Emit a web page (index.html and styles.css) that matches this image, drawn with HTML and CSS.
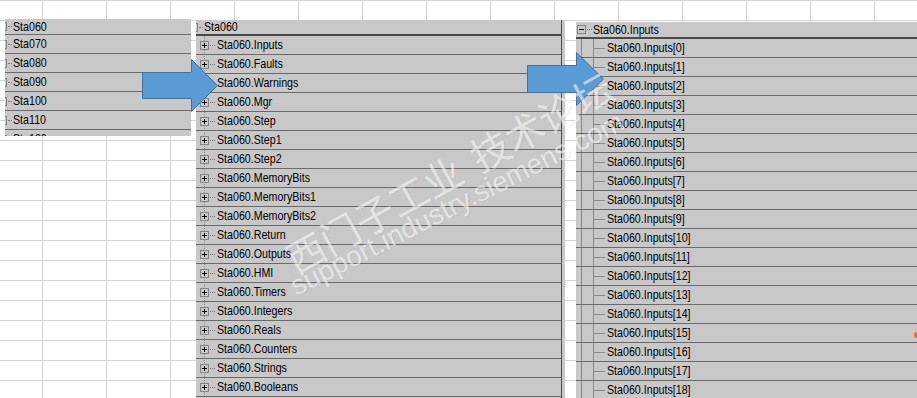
FILE: index.html
```html
<!DOCTYPE html>
<html lang="zh">
<head>
<meta charset="utf-8">
<title>Sta060</title>
<link rel="stylesheet" href="styles.css">
</head>
<body>
<div class="desk">
  <div class="panel left">
    <div class="list">
      <div class="row first"><span class="pm cut"></span><span class="dash"></span><span class="lbl">Sta060</span></div>
      <div class="row"><span class="pm cut"></span><span class="dash"></span><span class="lbl">Sta070</span></div>
      <div class="row"><span class="pm cut"></span><span class="dash"></span><span class="lbl">Sta080</span></div>
      <div class="row"><span class="pm cut"></span><span class="dash"></span><span class="lbl">Sta090</span></div>
      <div class="row"><span class="pm cut"></span><span class="dash"></span><span class="lbl">Sta100</span></div>
      <div class="row"><span class="pm cut"></span><span class="dash"></span><span class="lbl">Sta110</span></div>
      <div class="row"><span class="pm cut"></span><span class="dash"></span><span class="lbl">Sta120</span></div>
    </div>
  </div>

  <div class="panel mid">
    <div class="mid-main">
      <div class="row head mid-head"><span class="pm cut"></span><span class="dash"></span><span class="lbl">Sta060</span></div>
      <div class="items">
        <div class="row"><span class="pm plus"></span><span class="dash d5"></span><span class="lbl l2">Sta060.Inputs</span></div>
        <div class="row"><span class="pm plus"></span><span class="dash d5"></span><span class="lbl l2">Sta060.Faults</span></div>
        <div class="row"><span class="pm plus"></span><span class="dash d5"></span><span class="lbl l2">Sta060.Warnings</span></div>
        <div class="row"><span class="pm plus"></span><span class="dash d5"></span><span class="lbl l2">Sta060.Mgr</span></div>
        <div class="row"><span class="pm plus"></span><span class="dash d5"></span><span class="lbl l2">Sta060.Step</span></div>
        <div class="row"><span class="pm plus"></span><span class="dash d5"></span><span class="lbl l2">Sta060.Step1</span></div>
        <div class="row"><span class="pm plus"></span><span class="dash d5"></span><span class="lbl l2">Sta060.Step2</span></div>
        <div class="row"><span class="pm plus"></span><span class="dash d5"></span><span class="lbl l2">Sta060.MemoryBits</span></div>
        <div class="row"><span class="pm plus"></span><span class="dash d5"></span><span class="lbl l2">Sta060.MemoryBits1</span></div>
        <div class="row"><span class="pm plus"></span><span class="dash d5"></span><span class="lbl l2">Sta060.MemoryBits2</span></div>
        <div class="row"><span class="pm plus"></span><span class="dash d5"></span><span class="lbl l2">Sta060.Return</span></div>
        <div class="row"><span class="pm plus"></span><span class="dash d5"></span><span class="lbl l2">Sta060.Outputs</span></div>
        <div class="row"><span class="pm plus"></span><span class="dash d5"></span><span class="lbl l2">Sta060.HMI</span></div>
        <div class="row"><span class="pm plus"></span><span class="dash d5"></span><span class="lbl l2">Sta060.Timers</span></div>
        <div class="row"><span class="pm plus"></span><span class="dash d5"></span><span class="lbl l2">Sta060.Integers</span></div>
        <div class="row"><span class="pm plus"></span><span class="dash d5"></span><span class="lbl l2">Sta060.Reals</span></div>
        <div class="row"><span class="pm plus"></span><span class="dash d5"></span><span class="lbl l2">Sta060.Counters</span></div>
        <div class="row"><span class="pm plus"></span><span class="dash d5"></span><span class="lbl l2">Sta060.Strings</span></div>
        <div class="row"><span class="pm plus"></span><span class="dash d5"></span><span class="lbl l2">Sta060.Booleans</span></div>
      </div>
    </div>
  </div>

  <div class="panel right">
    <div class="row head right-head"><span class="pm minus"></span><span class="dash d5"></span><span class="lbl">Sta060.Inputs</span></div>
    <div class="kids">
      <div class="row"><span class="hl"></span><span class="lbl l2">Sta060.Inputs[0]</span></div>
      <div class="row"><span class="hl"></span><span class="lbl l2">Sta060.Inputs[1]</span></div>
      <div class="row"><span class="hl"></span><span class="lbl l2">Sta060.Inputs[2]</span></div>
      <div class="row"><span class="hl"></span><span class="lbl l2">Sta060.Inputs[3]</span></div>
      <div class="row"><span class="hl"></span><span class="lbl l2">Sta060.Inputs[4]</span></div>
      <div class="row"><span class="hl"></span><span class="lbl l2">Sta060.Inputs[5]</span></div>
      <div class="row"><span class="hl"></span><span class="lbl l2">Sta060.Inputs[6]</span></div>
      <div class="row"><span class="hl"></span><span class="lbl l2">Sta060.Inputs[7]</span></div>
      <div class="row"><span class="hl"></span><span class="lbl l2">Sta060.Inputs[8]</span></div>
      <div class="row"><span class="hl"></span><span class="lbl l2">Sta060.Inputs[9]</span></div>
      <div class="row"><span class="hl"></span><span class="lbl l2">Sta060.Inputs[10]</span></div>
      <div class="row"><span class="hl"></span><span class="lbl l2">Sta060.Inputs[11]</span></div>
      <div class="row"><span class="hl"></span><span class="lbl l2">Sta060.Inputs[12]</span></div>
      <div class="row"><span class="hl"></span><span class="lbl l2">Sta060.Inputs[13]</span></div>
      <div class="row"><span class="hl"></span><span class="lbl l2">Sta060.Inputs[14]</span></div>
      <div class="row"><span class="hl"></span><span class="lbl l2">Sta060.Inputs[15]</span></div>
      <div class="row"><span class="hl"></span><span class="lbl l2">Sta060.Inputs[16]</span></div>
      <div class="row"><span class="hl"></span><span class="lbl l2">Sta060.Inputs[17]</span></div>
      <div class="row"><span class="hl"></span><span class="lbl l2">Sta060.Inputs[18]</span></div>
    </div>
  </div>
</div>

<svg class="arrow a1" width="80" height="56" viewBox="0 0 80 56" aria-hidden="true">
  <polygon points="0.5,13.5 49.5,13.5 49.5,0.5 75.5,26.5 49.5,52.5 49.5,39.5 0.5,39.5" fill="#5b9bd5" stroke="#41719c" stroke-width="1"/>
</svg>
<svg class="arrow a2" width="80" height="56" viewBox="0 0 80 56" aria-hidden="true">
  <polygon points="0.5,13.5 49.5,13.5 49.5,0.5 76.5,27 49.5,53.5 49.5,40.5 0.5,40.5" fill="#5b9bd5" stroke="#41719c" stroke-width="1"/>
</svg>

<div class="wm wm-cn">西门子工业<span class="wm-gap">技术论坛</span></div>
<div class="wm wm-en">support.industry.siemens.com</div>
<span class="dot"></span>
</body>
</html>
```

FILE: styles.css
```css
html, body {
  margin: 0;
  padding: 0;
}
body {
  width: 917px;
  height: 398px;
  overflow: hidden;
  position: relative;
  background-color: #ffffff;
  background-image:
    linear-gradient(to right, #d4d4d4 1px, transparent 1px),
    linear-gradient(to bottom, #d4d4d4 1px, transparent 1px);
  background-size: 64px 20px;
  background-position: 42px 0, 0 0;
  font-family: "Liberation Sans", Arial, sans-serif;
  font-size: 13px;
  color: #000;
}

.desk {
  display: flex;
  align-items: flex-start;
  padding-left: 5px;
  height: 398px;
  overflow: hidden;
}

.panel {
  background: #c8c8c8;
  overflow: hidden;
  flex: none;
}

.left {
  width: 186px;
  height: 117px;
  margin-top: 19px;
}
.left .row.first {
  height: 15px;
  line-height: 15px;
}

.mid {
  width: 369px;
  height: 378px;
  margin-top: 20px;
  margin-left: 5px;
  padding-right: 3px;
  box-sizing: border-box;
}
.mid-main {
  border-right: 1px solid #4e4e4e;
  height: 100%;
}

.right {
  width: 350px;
  height: 380px;
  margin-top: 22px;
  margin-left: 11px;
}

.row {
  display: flex;
  align-items: center;
  height: 18px;
  border-bottom: 1px solid #6a6a6a;
  white-space: nowrap;
  line-height: 18px;
}
.head {
  border-bottom: 2px solid #4a4a4a;
}
.mid-head {
  height: 14px;
  line-height: 14px;
}
.right-head {
  height: 15px;
  line-height: 15px;
  padding-left: 1px;
}

.items {
  background-image: linear-gradient(to bottom, #8c8c8c 50%, transparent 50%);
  background-size: 1px 2px;
  background-position: 8px 0;
  background-repeat: repeat-y;
}
.items .row {
  padding-left: 4px;
}

.kids {
  background:
    linear-gradient(#8a8a8a, #8a8a8a) 5px 0 / 1px 100% no-repeat,
    linear-gradient(#8a8a8a, #8a8a8a) 17px 0 / 1px 100% no-repeat,
    #c8c8c8;
}
.kids .row {
  padding-left: 17px;
}

.pm {
  flex: none;
  width: 9px;
  height: 9px;
  box-sizing: border-box;
  border: 1px solid #858585;
  background-color: #c8c8c8;
}
.pm.cut {
  margin-left: -7px;
}
.pm.plus {
  background:
    linear-gradient(#000, #000) center / 5px 1px no-repeat,
    linear-gradient(#000, #000) center / 1px 5px no-repeat,
    #c8c8c8;
}
.pm.minus {
  background:
    linear-gradient(#000, #000) center / 5px 1px no-repeat,
    #c8c8c8;
}

.dash {
  flex: none;
  width: 4px;
  height: 0;
  margin-left: 1px;
  border-top: 1px dotted #7a7a7a;
}
.dash.d5 {
  width: 5px;
}
.hl {
  flex: none;
  width: 12px;
  height: 0;
  border-top: 1px solid #8a8a8a;
}

.lbl {
  display: inline-block;
  margin-left: 1px;
  transform: scaleX(0.82);
  transform-origin: 0 50%;
}
.lbl.l2 {
  margin-left: 2px;
}

.arrow {
  position: absolute;
  z-index: 2;
}
.a1 {
  left: 142px;
  top: 59px;
}
.a2 {
  left: 527px;
  top: 52px;
}

.wm {
  position: absolute;
  z-index: 3;
  white-space: pre;
  color: rgba(255, 255, 255, 0.58);
  text-shadow: 1px 1px 0 rgba(0, 0, 0, 0.06);
  pointer-events: none;
}
.wm-cn {
  left: 286px;
  top: 232px;
  font-family: "Noto Sans CJK SC", sans-serif;
  font-size: 39px;
  line-height: 39px;
  transform-origin: 19.5px 19.5px;
  transform: rotate(-29deg);
}
.wm-gap {
  margin-left: 0.4em;
}
.wm-en {
  left: 297px;
  top: 273px;
  font-family: "Liberation Sans", Arial, sans-serif;
  font-size: 28px;
  line-height: 28px;
  transform-origin: 0 24px;
  transform: rotate(-27deg);
}

.dot {
  position: absolute;
  left: 914px;
  top: 332px;
  width: 6px;
  height: 6px;
  border-radius: 50%;
  background: #ee6a2c;
  z-index: 1;
}
```
